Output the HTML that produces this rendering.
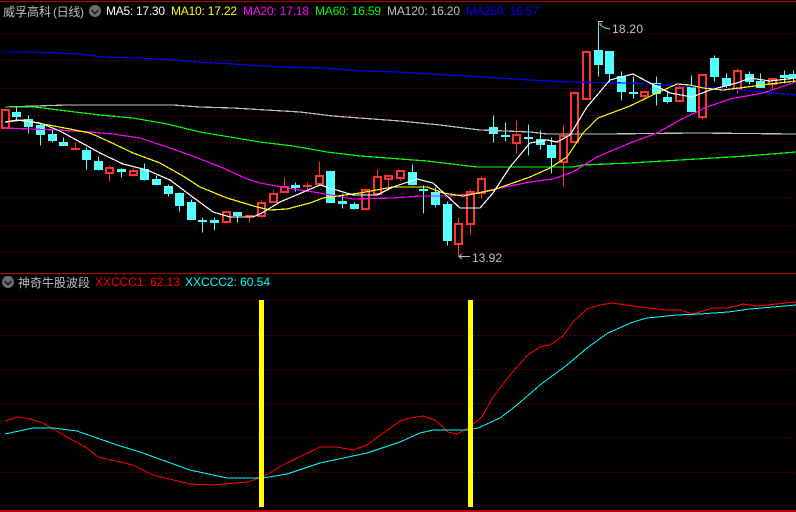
<!DOCTYPE html>
<html><head><meta charset="utf-8"><style>
html,body{margin:0;padding:0;background:#000;width:796px;height:512px;overflow:hidden}
svg{display:block}
text{font-family:"Liberation Sans","Noto Sans CJK SC",sans-serif;font-size:12px}
.g{stroke:#a00000;stroke-width:1;stroke-dasharray:1 3;fill:none}
.l{fill:none;stroke-width:1.2;shape-rendering:crispEdges}
.m{fill:none;stroke-width:1.2;shape-rendering:crispEdges}
.s{fill:none;stroke-width:1;shape-rendering:crispEdges}
</style></head><body>
<svg width="796" height="512" viewBox="0 0 796 512" xmlns="http://www.w3.org/2000/svg">
<rect width="796" height="512" fill="#000"/>
<g shape-rendering="crispEdges">
<rect x="0" y="1" width="796" height="1" fill="#a00000"/>
<rect x="0" y="273" width="796" height="1" fill="#b00000"/>
<rect x="0" y="510" width="796" height="2" fill="#c00000"/>
<path class="g" d="M2 33.5H796M2 60.5H796M2 88.5H796M2 115.5H796M2 142.5H796M2 170.5H796M2 197.5H796M2 225.5H796M2 252.5H796M2 300.5H796M2 335.5H796M2 369.5H796M2 403.5H796M2 437.5H796M2 472.5H796"/>
<g transform="translate(.5 .5)">
<path fill="none" stroke="#54ffff" d="M16 107V120M28 115V133M40 122V145M52 130V142M63 137V145M86 147V169M98 156V170M121 168V177M144 163V180M156 175V185M168 184V196M179 192V211M191 199V219M202 217V232M214 217V230M237 212V222M295 182V191M330 171V202M342 193V208M354 202V209M412 164V185M423 185V213M435 187V207M447 201V245M493 115V142M505 122V141M528 124V155M540 130V149M551 137V173M598 21V76M609 51V82M621 71V100M633 76V98M656 76V105M667 90V103M691 75V112M714 55V81M726 73V88M749 71V84M760 73V87M784 70V83M793 70V80"/>
<path fill="#54ffff" stroke="#54ffff" d="M12 112H20V116H12ZM24 119H32V126H24ZM36 125H44V134H36ZM48 134H56V140H48ZM59 142H67V145H59ZM82 150H90V159H82ZM94 161H102V169H94ZM117 169H125V171H117ZM140 169H148V179H140ZM152 179H160V184H152ZM164 186H172V193H164ZM175 193H183V205H175ZM187 202H195V219H187ZM198 220H206V221H198ZM210 220H218V222H210ZM233 212H241V215H233ZM291 185H299V187H291ZM326 171H334V202H326ZM338 201H346V203H338ZM350 204H358V208H350ZM408 172H416V184H408ZM419 189H427V190H419ZM431 192H439V204H431ZM443 204H451V240H443ZM489 127H497V133H489ZM501 135H509V136H501ZM524 137H532V138H524ZM536 139H544V144H536ZM547 145H555V157H547ZM594 50H602V64H594ZM605 51H613V73H605ZM617 76H625V91H617ZM629 92H637V93H629ZM652 83H660V93H652ZM663 97H671V101H663ZM687 87H695V111H687ZM710 58H718V76H710ZM722 78H730V85H722ZM745 74H753V81H745ZM756 81H764V87H756ZM780 75H788V77H780ZM789 74H797V77H789Z"/>
<path fill="none" stroke="#ff3232" d="M75 142V150M109 165V181M133 168V176M249 215V222M261 200V217M273 190V202M284 177V192M307 182V190M319 161V184M365 188V209M377 169V194M388 175V190M400 170V180M458 217V256M470 189V234M481 176V198M516 120V153M563 125V186M574 91V142M586 50V99M644 90V98M679 86V101M702 74V119M737 68V93M772 78V89"/>
</g>
<path fill="#000" stroke="#ff3232" stroke-width="1.6" d="M2 110H9V128H2ZM106 168H113V173H106ZM130 171H137V175H130ZM223 212H230V222H223ZM258 203H265V216H258ZM270 194H277V202H270ZM281 187H288V192H281ZM316 176H323V184H316ZM362 190H369V209H362ZM374 177H381V194H374ZM385 176H392V179H385ZM397 171H404V178H397ZM455 224H462V244H455ZM467 192H474V224H467ZM478 179H485V193H478ZM513 135H520V143H513ZM560 136H567V162H560ZM571 93H578V142H571ZM583 52H590V99H583ZM641 92H648V96H641ZM676 88H683V101H676ZM699 75H706V117H699ZM734 71H741V89H734ZM769 79H776V84H769Z"/>
<path fill="#ff3232" stroke="#ff3232" d="M71.5 148.5H79.5V149.5H71.5ZM245.5 215.5H253.5V216.5H245.5ZM303.5 185.5H311.5V186.5H303.5Z"/>
<path class="l" stroke="#0000ff" d="M5 52L35 52L80 54L103 57L163 59L197 62L233 64L280 67L325 68L360 71L400 72L530 80L570 82L630 83L663 85L730 89L763 92L796 95"/>
<path class="l" stroke="#c0c0c0" d="M5 107L67 105L173 105L200 107L233 108L300 112L333 116L400 121L440 125L480 130L530 132L547 134L603 134L697 133L796 134"/>
<path class="l" stroke="#00ff00" d="M5 107L35 107L67 111L100 115L133 118L167 124L200 132L260 142L293 146L327 152L360 156L427 161L460 165L477 167L573 167L583 165L630 163L697 159L747 156L796 152"/>
</g>
<path class="m" stroke="#ff00ff" d="M5 128L57 130L90 132L113 134L140 138L167 147L190 155L223 168L247 179L260 183L293 189L320 193L353 199L393 198L420 196L450 196L477 193L500 188L530 182L553 179L573 172L597 157L630 143L657 133L680 120L707 107L730 99L763 93L796 82"/>
<path class="m" stroke="#ffff00" d="M5 122L23 120L43 124L70 129L90 133L110 142L133 153L160 163L183 176L200 187L227 198L257 207L270 210L287 209L310 203L323 198L360 193L393 187L427 187L443 193L463 196L493 190L530 177L550 168L567 157L583 133L598 118L630 106L657 93L677 84L690 85L703 88L723 90L747 87L770 84L796 81"/>
<path class="m" stroke="#ffffff" d="M5 122L17 120L40 123L60 131L80 142L100 153L123 164L147 170L170 180L190 195L213 212L230 217L253 217L262 213L280 202L320 185L353 195L377 195L393 187L417 179L433 183L460 208L480 208L493 193L510 167L530 143L547 140L557 142L570 135L587 107L610 80L633 74L650 83L670 93L692 97L710 90L737 83L750 78L770 81L796 78"/>
<path class="s" stroke="#ff0000" d="M5 421L18 417L30 419L43 423L67 437L87 448L98 457L133 465L153 475L190 484L213 485L247 482L263 477L283 465L320 447L337 447L353 450L367 445L400 421L410 418L423 416L435 420L448 432L457 434L468 428L482 417L493 397L515 369L528 355L540 347L550 345L563 336L573 322L587 309L600 305L612 303L640 307L667 310L680 310L693 314L713 308L728 308L743 304L757 306L796 302"/>
<path class="s" stroke="#00ffff" d="M5 434L33 428L53 428L77 431L117 445L140 452L190 470L227 478L263 478L287 474L320 463L367 453L400 442L420 433L433 430L467 430L478 428L500 418L517 405L540 385L567 365L587 348L608 333L633 322L647 318L677 315L700 314L728 312L750 309L796 305"/>
<g shape-rendering="crispEdges">
<rect x="259" y="300" width="5" height="207" fill="#ffff00"/>
<rect x="468" y="300" width="5" height="207" fill="#ffff00"/>
</g>
<path fill="none" stroke="#c0c0c0" d="M598.5 26V21.5H603M598.5 24H602M600 25L605 28L610 29"/>
<path fill="none" stroke="#c0c0c0" d="M470 256.5H459M462 254L459 256.5L462 259"/>
<text x="612" y="33" fill="#c0c0c0" textLength="31" lengthAdjust="spacing">18.20</text>
<text x="472" y="262" fill="#c0c0c0" textLength="30" lengthAdjust="spacing">13.92</text>
<text x="3" y="16" fill="#c0c0c0" style="font-size:12px">威孚高科</text>
<text x="53" y="16" fill="#c0c0c0" style="font-size:12px" textLength="31" lengthAdjust="spacing">(日线)</text>
<circle cx="95" cy="11" r="6" fill="#6e6e6e"/>
<path d="M91.5 10L95 13.5L98.5 10" fill="none" stroke="#111" stroke-width="1.4"/>
<circle cx="8" cy="282" r="6" fill="#6e6e6e"/>
<path d="M4.5 281L8 284.5L11.5 281" fill="none" stroke="#111" stroke-width="1.4"/>
<text x="106" y="15" fill="#ffffff" textLength="59" lengthAdjust="spacing">MA5: 17.30</text>
<text x="171" y="15" fill="#ffff00" textLength="66" lengthAdjust="spacing">MA10: 17.22</text>
<text x="243" y="15" fill="#ff00ff" textLength="66" lengthAdjust="spacing">MA20: 17.18</text>
<text x="315" y="15" fill="#00ff00" textLength="66" lengthAdjust="spacing">MA60: 16.59</text>
<text x="387" y="15" fill="#c0c0c0" textLength="73" lengthAdjust="spacing">MA120: 16.20</text>
<text x="466" y="15" fill="#0000ff" textLength="73" lengthAdjust="spacing">MA250: 16.57</text>
<text x="18" y="287" fill="#c0c0c0" textLength="72" lengthAdjust="spacing">神奇牛股波段</text>
<text x="95" y="286" fill="#ff0000" textLength="85" lengthAdjust="spacing">XXCCC1: 62.13</text>
<text x="185" y="286" fill="#00ffff" textLength="85" lengthAdjust="spacing">XXCCC2: 60.54</text>
</svg>
</body></html>
